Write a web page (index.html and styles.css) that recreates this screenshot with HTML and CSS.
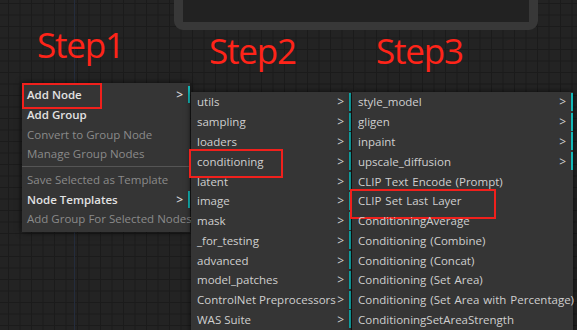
FILE: index.html
```html
<!DOCTYPE html>
<html>
<head>
<meta charset="utf-8">
<link rel="stylesheet" href="styles.css">
</head>
<body>
<div class="canvas">
  <div class="wire"></div>
  <div class="node-panel"></div>

  <div class="step step1">Step1</div>
  <div class="step step2">Step2</div>
  <div class="step step3">Step3</div>

  <div class="menu menu1">
    <div class="entry strong submenu hl hl-add"><span>Add Node</span><i>&gt;</i></div>
    <div class="entry strong"><span>Add Group</span></div>
    <div class="entry disabled"><span>Convert to Group Node</span></div>
    <div class="entry disabled"><span>Manage Group Nodes</span></div>
    <div class="sep"></div>
    <div class="entry disabled"><span>Save Selected as Template</span></div>
    <div class="entry strong submenu"><span>Node Templates</span><i>&gt;</i></div>
    <div class="entry disabled"><span>Add Group For Selected Nodes</span></div>
  </div>

  <div class="menu menu2">
    <div class="entry submenu"><span>utils</span><i>&gt;</i></div>
    <div class="entry submenu"><span>sampling</span><i>&gt;</i></div>
    <div class="entry submenu"><span>loaders</span><i>&gt;</i></div>
    <div class="entry submenu hl hl-cond"><span>conditioning</span><i>&gt;</i></div>
    <div class="entry submenu"><span>latent</span><i>&gt;</i></div>
    <div class="entry submenu"><span>image</span><i>&gt;</i></div>
    <div class="entry submenu"><span>mask</span><i>&gt;</i></div>
    <div class="entry submenu"><span>_for_testing</span><i>&gt;</i></div>
    <div class="entry submenu"><span>advanced</span><i>&gt;</i></div>
    <div class="entry submenu"><span>model_patches</span><i>&gt;</i></div>
    <div class="entry submenu"><span>ControlNet Preprocessors</span><i>&gt;</i></div>
    <div class="entry submenu"><span>WAS Suite</span><i>&gt;</i></div>
  </div>

  <div class="menu menu3">
    <div class="entry submenu"><span>style_model</span><i>&gt;</i></div>
    <div class="entry submenu"><span>gligen</span><i>&gt;</i></div>
    <div class="entry submenu"><span>inpaint</span><i>&gt;</i></div>
    <div class="entry submenu"><span>upscale_diffusion</span><i>&gt;</i></div>
    <div class="entry"><span>CLIP Text Encode (Prompt)</span></div>
    <div class="entry hl hl-clip"><span>CLIP Set Last Layer</span></div>
    <div class="entry"><span>ConditioningAverage</span></div>
    <div class="entry"><span>Conditioning (Combine)</span></div>
    <div class="entry"><span>Conditioning (Concat)</span></div>
    <div class="entry"><span>Conditioning (Set Area)</span></div>
    <div class="entry"><span>Conditioning (Set Area with Percentage)</span></div>
    <div class="entry"><span>ConditioningSetAreaStrength</span></div>
  </div>
</div>
</body>
</html>
```

FILE: styles.css
```css
* { box-sizing: border-box; }

html, body {
  margin: 0;
  padding: 0;
}

body {
  width: 577px;
  height: 330px;
  overflow: hidden;
  background: #222;
  font-family: "Open Sans", "Liberation Sans", sans-serif;
}

.canvas {
  position: relative;
  width: 577px;
  height: 330px;
  background-color: #232323;
  background-image:
    linear-gradient(to right, #1b1b1b 1px, transparent 1px),
    linear-gradient(to bottom, #1b1b1b 1px, transparent 1px);
  background-size: 11.5px 11.5px;
  background-position: 8px 3px;
}

.wire {
  position: absolute;
  left: 74px;
  top: 0;
  width: 1px;
  height: 330px;
  background: #242c3c;
}

.node-panel {
  position: absolute;
  left: 174px;
  top: -20px;
  width: 364px;
  height: 50px;
  background: #222;
  border: 8px solid #383838;
  border-left-width: 9px;
  border-right-width: 9px;
  border-radius: 9px;
}

.step {
  position: absolute;
  color: #ff2419;
  font-size: 35px;
  line-height: 1;
  font-family: "Open Sans", "Liberation Sans", sans-serif;
  letter-spacing: -1.2px;
}
.step1 { left: 37px; top: 27px; }
.step2 { left: 209px; top: 33px; }
.step3 { left: 376px; top: 33px; }

.menu {
  position: absolute;
  display: flex;
  flex-direction: column;
  background: #353535;
  box-shadow: 0 0 6px rgba(0,0,0,0.7);
  font-size: 11.5px;
  color: #cfcfcf;
}

.menu1 {
  left: 22px;
  top: 83px;
  width: 168px;
  padding: 2px 0 3px;
}
.menu2 {
  left: 191px;
  top: 92px;
  width: 160px;
  height: 250px;
}
.menu3 {
  left: 352px;
  top: 92px;
  width: 221px;
  height: 250px;
  word-spacing: 1px;
}

.entry {
  position: relative;
  flex: none;
  display: flex;
  align-items: center;
  justify-content: space-between;
  height: 18px;
  margin: 0.9px 0;
  padding-left: 6px;
  padding-right: 5px;
  white-space: nowrap;
  border-right: 2px solid transparent;
}
.menu1 .entry {
  padding-left: 5px;
  height: 17px;
  margin: 1.35px 0;
}

.entry i {
  font-style: normal;
  color: #d0d0d0;
  font-size: 12px;
}

.entry.submenu { border-right-color: #13b8b8; }

.entry.strong { color: #e2e2e2; font-weight: 600; }
.entry.disabled { color: #8a8a8a; }

.sep {
  flex: none;
  height: 1px;
  background: #555;
  margin: 2px 0 3px;
}

.hl::after {
  content: "";
  position: absolute;
  border: 2px solid #f0201c;
  pointer-events: none;
}
.hl-add::after { left: 0; top: -3px; width: 76px; height: 22px; }
.hl-cond::after { left: -2px; top: -3px; width: 90px; height: 25px; }
.hl-clip::after { left: -2px; top: -3px; width: 142px; height: 26px; }
```
